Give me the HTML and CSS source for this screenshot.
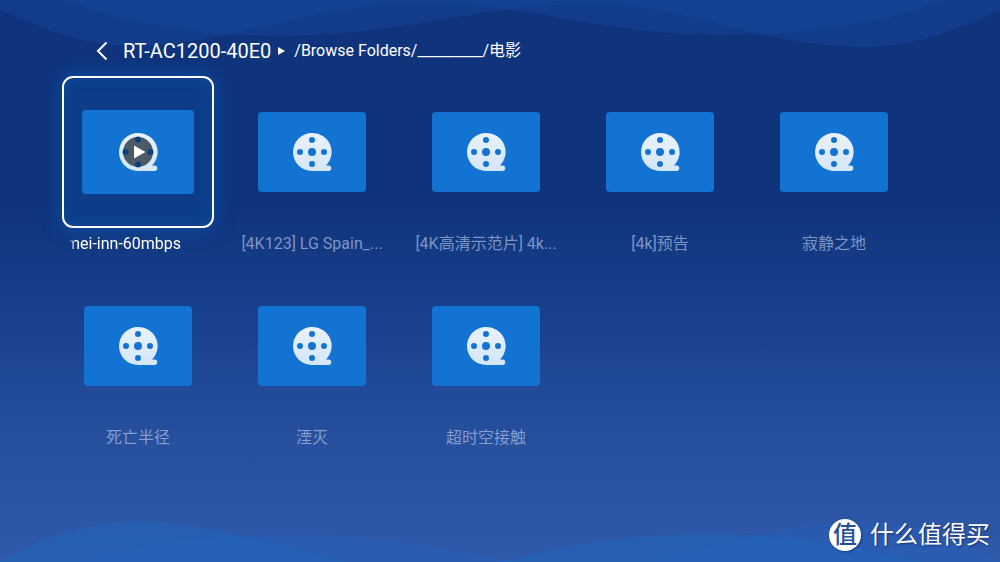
FILE: index.html
```
<!DOCTYPE html>
<html lang="zh-CN">
<head>
<meta charset="utf-8">
<meta name="viewport" content="width=device-width, initial-scale=1">
<title>RT-AC1200-40E0</title>
<link rel="stylesheet" href="styles.css">
</head>
<body>
<svg width="0" height="0" class="defs" aria-hidden="true">
  <defs>
    <linearGradient id="reelFill" x1="0" y1="0" x2="0" y2="1">
      <stop offset="0" stop-color="#e9f2fc"/>
      <stop offset="1" stop-color="#d3e6f9"/>
    </linearGradient>
    <symbol id="reel" viewBox="0 0 40 40">
      <path fill="url(#reelFill)" fill-rule="evenodd" d="M20 1a19 19 0 0 1 14 32.500H36.500a2.700 2.700 0 0 1 0 5.500H20A19 19 0 0 1 20 1ZM20 5a3 3 0 1 0 0 6a3 3 0 1 0 0-6ZM20 29a3 3 0 1 0 0 6a3 3 0 1 0 0-6ZM8 17a3 3 0 1 0 0 6a3 3 0 1 0 0-6ZM32 17a3 3 0 1 0 0 6a3 3 0 1 0 0-6ZM20 16a4 4 0 1 0 0 8a4 4 0 1 0 0-8Z"/>
    </symbol>
  </defs>
</svg>
<div class="screen">
  <svg class="wave wave-top" viewBox="0 0 1000 50" preserveAspectRatio="none" aria-hidden="true">
    <path d="M0 0V9C45 30 85 46 132 46C225 46 320 3 420 3C530 3 600 35 720 35C800 35 880 25 945 0Z"/>
    <path d="M62 0C125 23 200 36 280 36C400 36 480 4 590 4C690 4 760 47 865 47C910 47 955 32 1000 10V0Z"/>
  </svg>
  <svg class="wave wave-bottom" viewBox="0 0 1000 40" preserveAspectRatio="none" aria-hidden="true">
    <path d="M0 39C45 15 85 0 137 0C210 0 280 25 345 40H0Z"/>
    <path class="faint" d="M80 40C140 22 210 12 290 12C370 12 440 24 510 40Z"/>
    <path d="M500 40C570 22 630 12 710 12C790 12 860 24 920 40Z"/>
    <path class="faint" d="M655 40C730 20 790 0 863 0C915 0 955 15 1000 39V40Z"/>
  </svg>

  <header class="topbar">
    <button class="back" type="button" aria-label="返回">
      <svg width="12" height="20" viewBox="0 0 12 20" aria-hidden="true"><path d="M10.500 1.500L2 10L10.500 18.500" fill="none" stroke="currentColor" stroke-width="2"/></svg>
    </button>
    <h1 class="device">RT-AC1200-40E0</h1>
    <svg class="arrow" width="7" height="8" viewBox="0 0 7 8" aria-hidden="true"><path d="M0 0L7 4L0 8Z" fill="currentColor"/></svg>
    <p class="path">/Browse Folders/_________/电影</p>
  </header>

  <main class="grid">
    <button class="item focused" type="button">
      <span class="frame"><span class="thumb"><svg class="reel" aria-hidden="true"><use href="#reel"/></svg>
        <svg class="play" viewBox="0 0 32 32" aria-hidden="true"><circle cx="16" cy="16" r="15" fill="#4c5a68"/><g fill="#0b3f7d"><circle cx="16" cy="3.500" r="3"/><circle cx="16" cy="28.500" r="3"/><circle cx="3.500" cy="16" r="3"/><circle cx="28.500" cy="16" r="3"/></g><path d="M12 9.500L23.500 16L12 22.500Z" fill="#fff"/></svg></span></span>
      <span class="label">mei-inn-60mbps</span>
    </button>
    <button class="item" type="button"><span class="frame"><span class="thumb"><svg class="reel" aria-hidden="true"><use href="#reel"/></svg></span></span><span class="label">[4K123] LG Spain_...</span></button>
    <button class="item" type="button"><span class="frame"><span class="thumb"><svg class="reel" aria-hidden="true"><use href="#reel"/></svg></span></span><span class="label">[4K高清示范片] 4k...</span></button>
    <button class="item" type="button"><span class="frame"><span class="thumb"><svg class="reel" aria-hidden="true"><use href="#reel"/></svg></span></span><span class="label">[4k]预告</span></button>
    <button class="item" type="button"><span class="frame"><span class="thumb"><svg class="reel" aria-hidden="true"><use href="#reel"/></svg></span></span><span class="label">寂静之地</span></button>
    <button class="item" type="button"><span class="frame"><span class="thumb"><svg class="reel" aria-hidden="true"><use href="#reel"/></svg></span></span><span class="label">死亡半径</span></button>
    <button class="item" type="button"><span class="frame"><span class="thumb"><svg class="reel" aria-hidden="true"><use href="#reel"/></svg></span></span><span class="label">湮灭</span></button>
    <button class="item" type="button"><span class="frame"><span class="thumb"><svg class="reel" aria-hidden="true"><use href="#reel"/></svg></span></span><span class="label">超时空接触</span></button>
  </main>

  <div class="watermark"><span class="seal">值</span><span>什么值得买</span></div>
</div>
</body>
</html>
```
FILE: styles.css
```
* { box-sizing: border-box; }

body {
  margin: 0;
  font-family: Roboto, "Noto Sans CJK SC", sans-serif;
  color: #fff;
}

.defs { position: absolute; }

.screen {
  position: relative;
  isolation: isolate;
  min-height: 100vh;
  overflow: hidden;
  background: linear-gradient(#0f347c 0%, #0f347c 36%, #18408c 55%, #264f9e 78%, #305aa9 100%);
}

.wave {
  position: absolute;
  left: 0;
  z-index: -1;
  width: 100%;
}

.wave-top { top: 0; height: 50px; fill: rgba(26, 82, 176, .25); }
.wave-bottom { bottom: 0; height: 40px; fill: rgba(28, 108, 196, .42); }
.wave-bottom .faint { fill: rgba(32, 100, 200, .3); }

.topbar {
  display: flex;
  align-items: center;
  height: 50px;
  margin: 26px 0 0;
  padding-left: 96px;
}

.back {
  display: flex;
  margin-right: 15px;
  padding: 0;
  border: 0;
  background: none;
  color: inherit;
}

.device {
  margin: 0;
  font-size: 20px;
  font-weight: 400;
  line-height: 24px;
}

.arrow { margin: 0 9px 0 7px; }

.path {
  margin: 0;
  font-size: 16px;
  line-height: 24px;
}

.grid {
  display: grid;
  grid-template-columns: repeat(auto-fill, 152px);
  gap: 14px 22px;
  padding: 0 62px;
}

.item {
  display: flex;
  flex-direction: column;
  align-items: center;
  gap: 4px;
  padding: 0;
  border: 0;
  background: none;
  color: rgba(184, 200, 232, .66);
  font: inherit;
  font-size: 16px;
}

.frame {
  display: grid;
  place-items: center;
  width: 100%;
  height: 152px;
  border-radius: 11px;
}

.thumb {
  display: grid;
  place-items: center;
  width: 108px;
  height: 80px;
  border-radius: 4px;
  background: #1373d3;
}

.reel, .play { grid-area: 1 / 1; }
.reel { width: 40px; height: 40px; }
.play { width: 32px; height: 32px; }

.label {
  width: 100%;
  overflow: hidden;
  line-height: 24px;
  text-align: center;
  text-overflow: ellipsis;
  white-space: nowrap;
}

.focused { color: #fff; }

.focused .frame {
  border: 2px solid #fff;
  background: rgba(12, 70, 150, .45);
  box-shadow: 0 0 16px 3px rgba(10, 92, 184, .5), inset 0 0 14px rgba(10, 88, 176, .45);
}

.focused .thumb { width: 112px; height: 84px; }

.focused .label {
  padding-left: 4px;
  text-align: left;
  text-overflow: clip;
  mask-image: linear-gradient(90deg, transparent 7px, #000 13px);
}

.watermark {
  position: absolute;
  right: 10px;
  bottom: 10px;
  display: flex;
  align-items: center;
  gap: 9px;
  font-size: 24px;
  line-height: 34px;
  text-shadow: 1px 1px 2px rgba(10, 35, 90, .7);
}

.seal {
  width: 32px;
  height: 32px;
  border-radius: 50%;
  background: #fff;
  color: #264f9a;
  font-weight: 500;
  line-height: 32px;
  text-align: center;
  text-shadow: none;
  box-shadow: 1px 1px 2px rgba(10, 35, 90, .5);
}
```
